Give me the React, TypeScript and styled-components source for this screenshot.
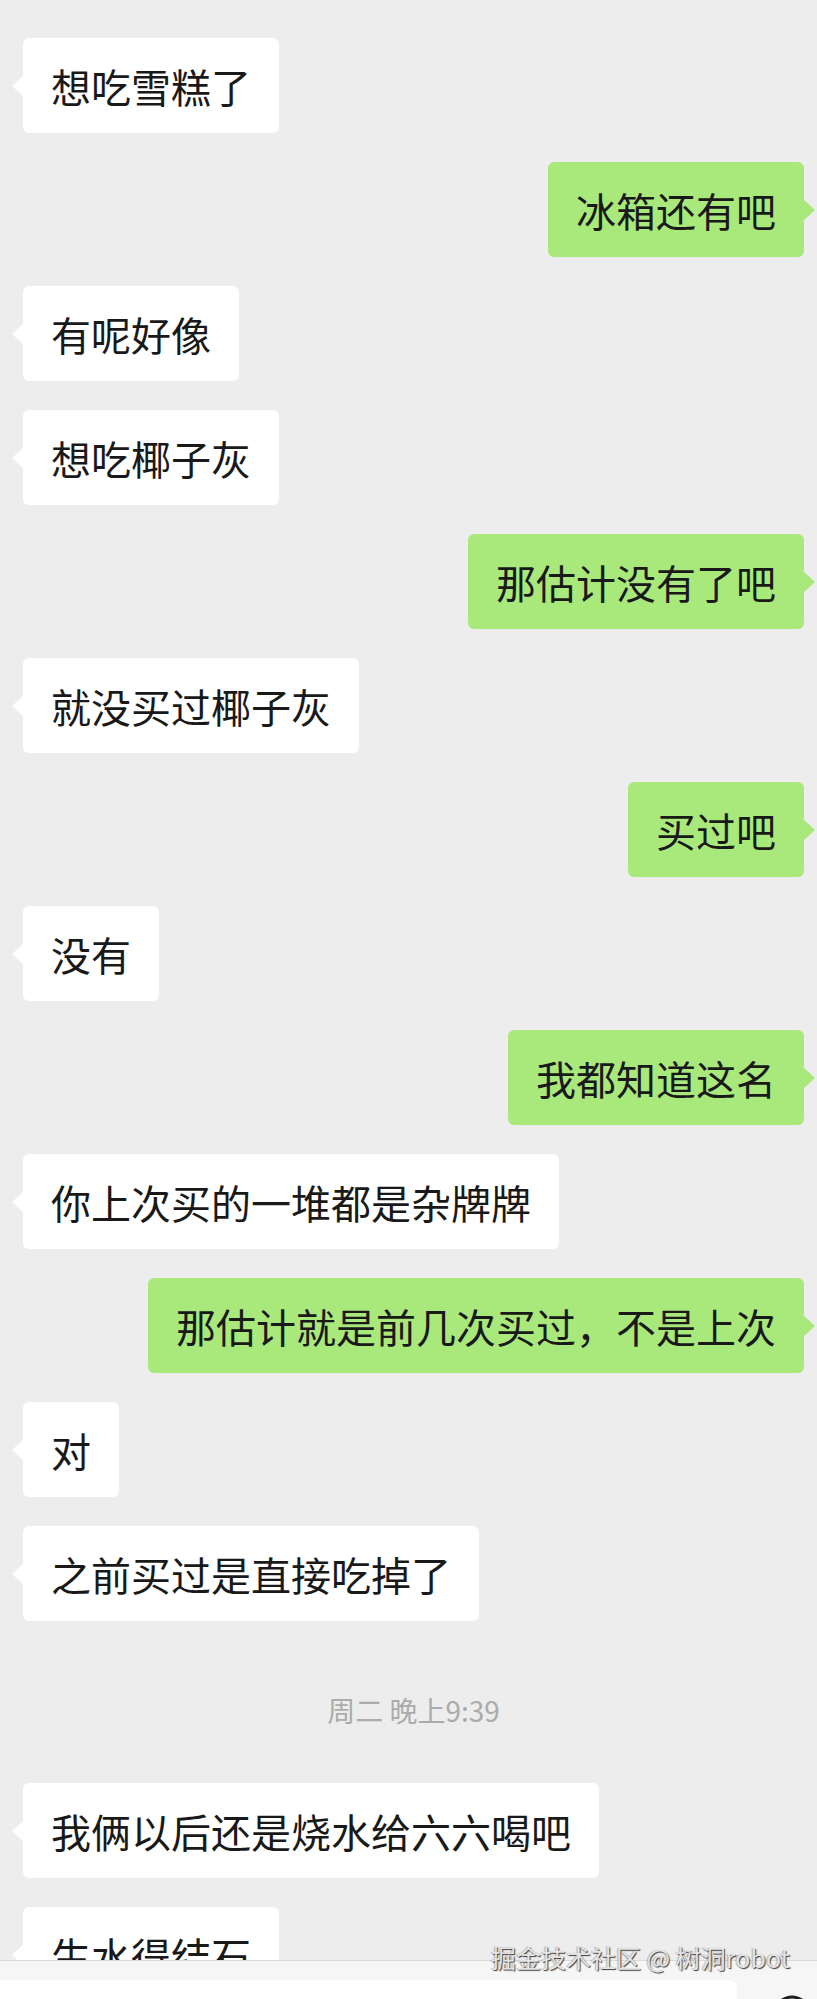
import styled, { createGlobalStyle } from "styled-components";

const GlobalStyle = createGlobalStyle`
  html, body {
    margin: 0;
    padding: 0;
    background: #ededed;
  }
  * {
    box-sizing: border-box;
  }
`;

const Screen = styled.div`
  position: relative;
  height: 1999px;
  display: flex;
  flex-direction: column;
  background: #ededed;
  font-family: "Noto Sans CJK SC", "Noto Sans", sans-serif;
  overflow: hidden;
`;

const MessageList = styled.div`
  flex: 1;
  overflow: hidden;
  display: flex;
  flex-direction: column;
  gap: 29px;
  padding: 38px 13px 0 23px;
`;

const Row = styled.div<{ $mine?: boolean }>`
  display: flex;
  justify-content: ${(p) => (p.$mine ? "flex-end" : "flex-start")};
  flex-shrink: 0;
`;

const Bubble = styled.div<{ $mine?: boolean }>`
  position: relative;
  height: 95px;
  padding: 0 28px;
  display: flex;
  align-items: center;
  border-radius: 6px;
  background: ${(p) => (p.$mine ? "#a9e97b" : "#ffffff")};
  color: #191919;
  font-size: 40px;
  line-height: 1;
  white-space: nowrap;

  &::before {
    content: "";
    position: absolute;
    top: 50%;
    transform: translateY(-50%);
    ${(p) => (p.$mine ? "right: -11px;" : "left: -11px;")}
    width: 0;
    height: 0;
    border-top: 11px solid transparent;
    border-bottom: 11px solid transparent;
    ${(p) =>
      p.$mine ? "border-left: 12px solid #a9e97b;" : "border-right: 12px solid #ffffff;"}
  }
`;

const TimeStamp = styled.div`
  flex-shrink: 0;
  height: 104px;
  padding-top: 42px;
  text-align: center;
  font-size: 28px;
  line-height: 36px;
  color: #ababab;
`;

const InputBar = styled.div`
  flex-shrink: 0;
  height: 39px;
  border-top: 1px solid #dadada;
  background: #f6f6f6;
  display: flex;
  align-items: flex-start;
  gap: 35px;
  padding-top: 19px;
`;

const InputBox = styled.div`
  width: 737px;
  height: 40px;
  background: #ffffff;
  border-radius: 0 8px 0 0;
`;

const EmojiIcon = styled.svg`
  margin-top: 14px;
  flex-shrink: 0;
`;

const Watermark = styled.div`
  position: absolute;
  right: 27px;
  top: 1941px;
  font-size: 25px;
  line-height: 32px;
  color: #e4e4e4;
  text-shadow: 1px 1px 1px rgba(0, 0, 0, 0.75), -1px 0 1px rgba(0, 0, 0, 0.25);
  white-space: nowrap;
`;

type Item = { kind: "msg"; text: string; mine?: boolean } | { kind: "time"; text: string };

const items: Item[] = [
  { kind: "msg", text: "想吃雪糕了" },
  { kind: "msg", text: "冰箱还有吧", mine: true },
  { kind: "msg", text: "有呢好像" },
  { kind: "msg", text: "想吃椰子灰" },
  { kind: "msg", text: "那估计没有了吧", mine: true },
  { kind: "msg", text: "就没买过椰子灰" },
  { kind: "msg", text: "买过吧", mine: true },
  { kind: "msg", text: "没有" },
  { kind: "msg", text: "我都知道这名", mine: true },
  { kind: "msg", text: "你上次买的一堆都是杂牌牌" },
  { kind: "msg", text: "那估计就是前几次买过，不是上次", mine: true },
  { kind: "msg", text: "对" },
  { kind: "msg", text: "之前买过是直接吃掉了" },
  { kind: "time", text: "周二 晚上9:39" },
  { kind: "msg", text: "我俩以后还是烧水给六六喝吧" },
  { kind: "msg", text: "生水得结石" },
];

export default function App() {
  return (
    <>
      <GlobalStyle />
      <Screen>
        <MessageList>
          {items.map((item, i) =>
            item.kind === "time" ? (
              <TimeStamp key={i}>{item.text}</TimeStamp>
            ) : (
              <Row key={i} $mine={item.mine}>
                <Bubble $mine={item.mine}>{item.text}</Bubble>
              </Row>
            )
          )}
        </MessageList>
        <InputBar>
          <InputBox />
          <EmojiIcon width="40" height="40" viewBox="0 0 40 40">
            <circle cx="20" cy="20" r="17" fill="none" stroke="#1f1f1f" strokeWidth="3" />
          </EmojiIcon>
        </InputBar>
        <Watermark>掘金技术社区 @ 树洞robot</Watermark>
      </Screen>
    </>
  );
}
